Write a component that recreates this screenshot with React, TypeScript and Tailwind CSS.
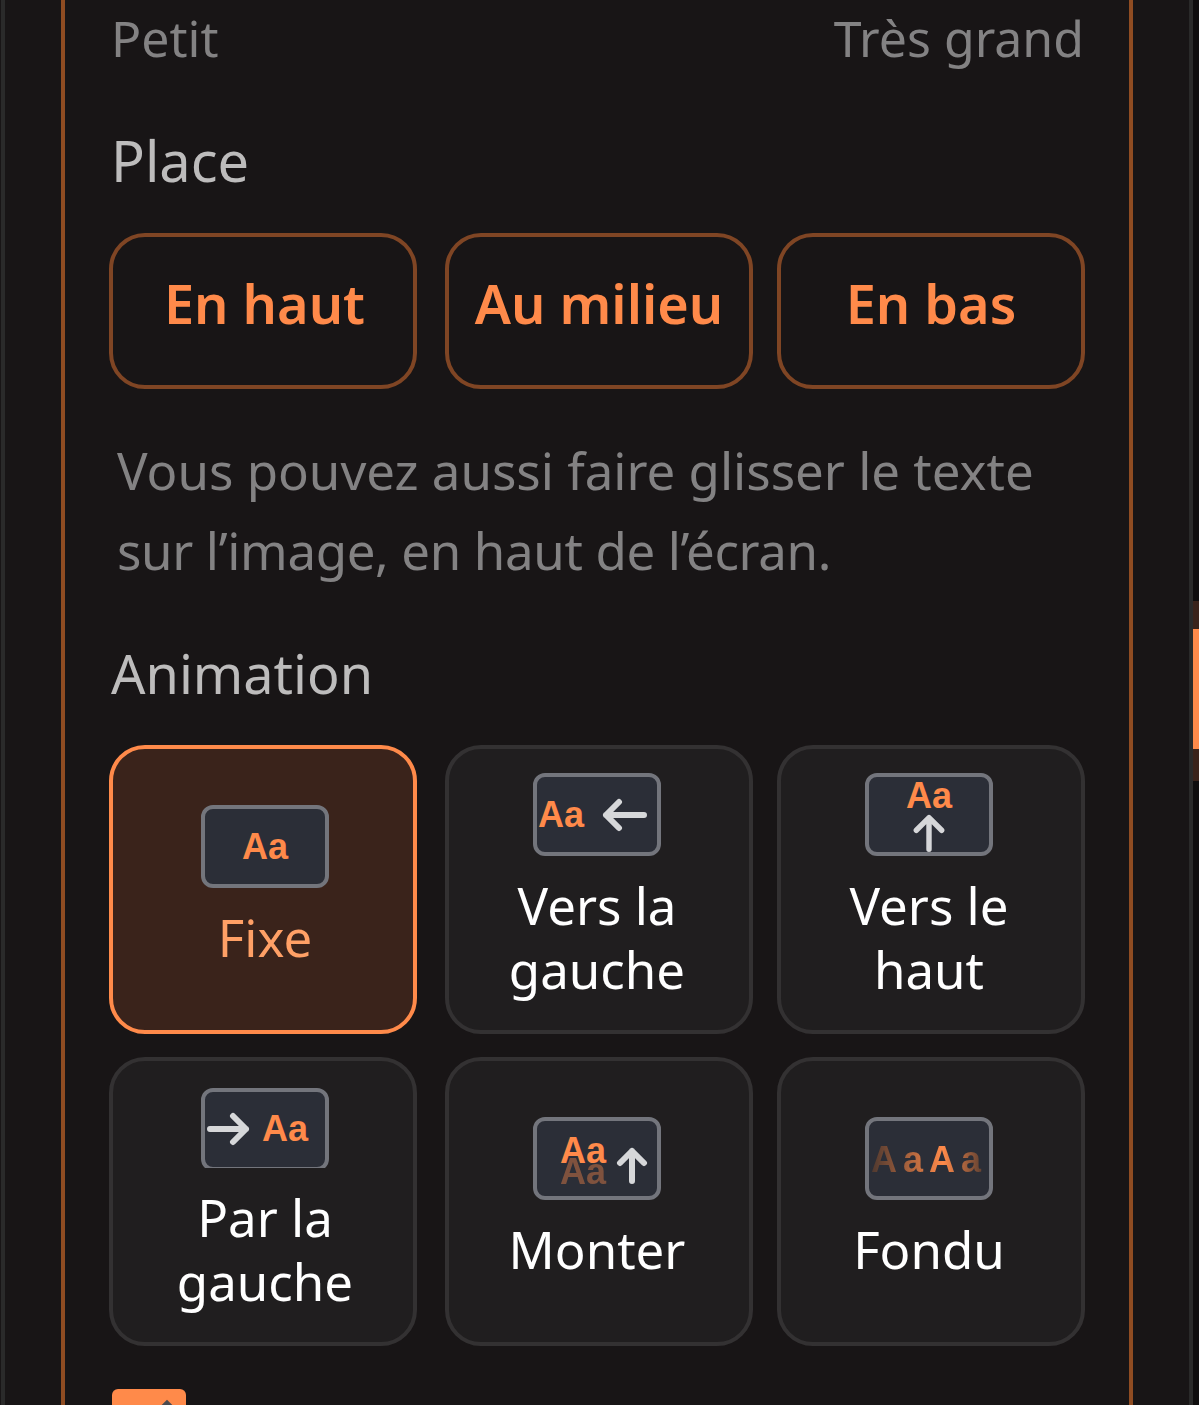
const ui = "font-['Noto_Sans','Open_Sans',sans-serif]";
const aa = "font-['Liberation_Sans',sans-serif] font-bold text-[36px] leading-none text-[#ff8a4a]";

function LeftArrow() {
  return (
    <svg width="48" height="34" viewBox="0 0 48 34" fill="none" stroke="#d6d7d9" strokeWidth="6" strokeLinecap="round" strokeLinejoin="round">
      <path d="M45 17H7M20 4 7 17l13 13" />
    </svg>
  );
}

function RightArrow() {
  return (
    <svg width="43" height="34" viewBox="0 0 43 34" fill="none" stroke="#d6d7d9" strokeWidth="6" strokeLinecap="round" strokeLinejoin="round">
      <path d="M3 17h36M26 4l13 13-13 13" />
    </svg>
  );
}

function UpArrow() {
  return (
    <svg width="36" height="42" viewBox="0 0 36 42" fill="none" stroke="#d6d7d9" strokeWidth="6" strokeLinecap="round" strokeLinejoin="round">
      <path d="M18 39V4M4 18 18 4l14 14" />
    </svg>
  );
}

function SmallUpArrow() {
  return (
    <svg width="32" height="37" viewBox="0 0 32 37" fill="none" stroke="#d6d7d9" strokeWidth="6" strokeLinecap="round" strokeLinejoin="round">
      <path d="M16 34V4M4 16 16 4l12 12" />
    </svg>
  );
}

function IconBox({ className, children }: { className?: string; children: React.ReactNode }) {
  return (
    <div className={`flex h-[83px] w-[128px] shrink-0 overflow-hidden rounded-[12px] border-4 border-[#73757c] bg-[#2b2e37] ${className ?? ""}`}>
      {children}
    </div>
  );
}

function PlaceButton({ label, className }: { label: string; className?: string }) {
  return (
    <button className={`h-[156px] w-[308px] rounded-[36px] border-4 border-[#7f4524] bg-transparent pb-[16px] text-[54px] font-semibold text-[#ff8a4a] ${className ?? ""}`}>
      {label}
    </button>
  );
}

function AnimCard({ label, active, icon, className }: { label: string[]; active?: boolean; icon: React.ReactNode; className?: string }) {
  return (
    <div
      className={`flex h-[289px] w-[308px] flex-col items-center justify-center rounded-[36px] border-4 pb-[5px] ${
        active ? "border-[#ff8a4a] bg-[#3a231b] text-[#ffa066]" : "border-[#333132] bg-[#201e1f] text-white"
      } ${className ?? ""}`}
    >
      {icon}
      <div className="mt-[17px] text-center text-[51px] leading-[64px]">
        {label.map((l) => (
          <div key={l}>{l}</div>
        ))}
      </div>
    </div>
  );
}

export default function App() {
  return (
    <div className={`${ui} flex h-[1405px] w-[1199px] overflow-hidden bg-[#181516]`}>
      <div className="ml-px h-full w-[4px] shrink-0 bg-[#2a2a2a]" />
      <div className="ml-[56px] flex h-full w-[1072px] shrink-0 flex-col border-x-4 border-[#8f4c22] pl-[44px]">
        <div className="flex w-[975px] justify-between pl-[2px] pt-[4px] text-[50px] leading-[68px] text-[#838283]">
          <span>Petit</span>
          <span>Très grand</span>
        </div>
        <div className="mt-[48px] pl-[2px] text-[56px] leading-[80px] text-[#bdbcbc]">Place</div>
        <div className="mt-[33px] flex">
          <PlaceButton label="En haut" className="mr-[28px] pl-[3px]" />
          <PlaceButton label="Au milieu" className="mr-[24px]" />
          <PlaceButton label="En bas" />
        </div>
        <p className="mt-[41px] pl-[8px] text-[51px] leading-[80px] text-[#838283]">
          Vous pouvez aussi faire glisser le texte
          <br />
          <span className="tracking-[-0.35px]">sur l’image, en haut de l’écran.</span>
        </p>
        <div className="mt-[43px] pl-[2px] text-[54px] leading-[80px] text-[#bdbcbc]">Animation</div>
        <div className="mt-[32px] grid grid-cols-[336px_332px_308px] gap-y-[23px]">
          <AnimCard
            active
            label={["Fixe"]}
            className="pl-[4px]"
            icon={
              <IconBox className="items-center justify-center">
                <span className={aa}>Aa</span>
              </IconBox>
            }
          />
          <AnimCard
            label={["Vers la", "gauche"]}
            className="pr-[4px]"
            icon={
              <IconBox className="items-center gap-[15px] pl-px">
                <span className={aa}>Aa</span>
                <LeftArrow />
              </IconBox>
            }
          />
          <AnimCard
            label={["Vers le", "haut"]}
            className="pr-[4px]"
            icon={
              <IconBox className="flex-col items-center pt-[1px]">
                <span className={aa}>Aa</span>
                <UpArrow />
              </IconBox>
            }
          />
          <AnimCard
            label={["Par la", "gauche"]}
            className="pl-[4px]"
            icon={
              <div className="mt-[2px] h-[80px] overflow-hidden">
                <IconBox className="items-center gap-[12px] pl-[2px]">
                  <RightArrow />
                  <span className={aa}>Aa</span>
                </IconBox>
              </div>
            }
          />
          <AnimCard
            label={["Monter"]}
            className="pr-[4px]"
            icon={
              <IconBox className="items-center gap-[10px] pl-[23px]">
                <div className="mt-[5px] flex flex-col">
                  <span className={aa}>Aa</span>
                  <span className={`${aa} -mt-[15px] opacity-40`}>Aa</span>
                </div>
                <div className="mt-[14px]">
                  <SmallUpArrow />
                </div>
              </IconBox>
            }
          />
          <AnimCard
            label={["Fondu"]}
            className="pr-[4px]"
            icon={
              <IconBox className="items-center justify-center">
                <span className="mt-[3px] bg-[linear-gradient(90deg,#4d382f,#ff8a4a_62%,#4d382f)] bg-clip-text font-['Liberation_Sans',sans-serif] text-[36px] font-bold leading-none tracking-[6px] text-transparent">
                  AaAa
                </span>
              </IconBox>
            }
          />
        </div>
        <div className="mt-[43px] flex items-start">
          <div className="relative ml-[3px] h-[73px] w-[74px] shrink-0 overflow-hidden rounded-[6px] bg-[#ff8a4a]">
            <div className="absolute left-[47px] top-[14px] h-[16px] w-[16px] rotate-45 bg-[#4a4a4f]" />
          </div>
          <span className="ml-[44px] mt-[3px] text-[50px] leading-[64px] text-white">Contour</span>
        </div>
      </div>
      <div className="ml-[56px] h-full w-[4px] shrink-0 bg-[#2a2a2a]" />
      <div className="flex h-full w-[6px] shrink-0 flex-col bg-[#0f0d0e]">
        <div className="mt-[601px] h-[28px] bg-[#3a231b]" />
        <div className="h-[120px] bg-[#ff8a4a]" />
        <div className="h-[32px] bg-[#3a231b]" />
      </div>
    </div>
  );
}
